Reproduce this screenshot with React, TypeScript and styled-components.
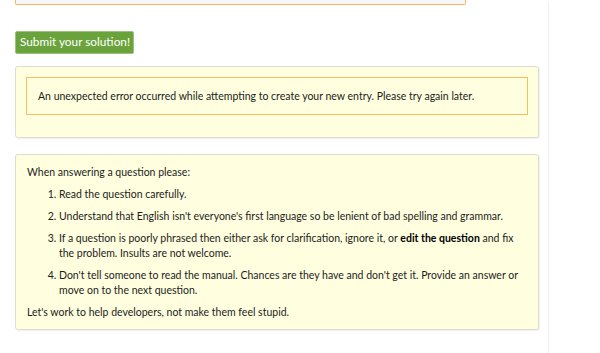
import React from "react";
import styled, { createGlobalStyle } from "styled-components";

const GlobalStyle = createGlobalStyle`
  html, body { margin: 0; padding: 0; background: #fff; }
  body {
    font-family: Lato, "Liberation Sans", sans-serif;
    font-size: 10.5px;
    line-height: 15px;
    color: #1c1c1c;
  }
`;

const Page = styled.div`
  display: flex;
  min-height: 353px;
`;

const Main = styled.main`
  width: 524px;
  padding: 0 9px 0 15px;
  display: flex;
  flex-direction: column;
  align-items: flex-start;
`;

const Sidebar = styled.aside`
  flex: 1;
  margin-top: 2px;
  border-left: 1px solid #eeeeee;
`;

const EditorTail = styled.div`
  box-sizing: border-box;
  width: 451px;
  height: 5px;
  background: #f7f7f7;
  border: 1px solid #f8b55c;
  border-top: none;
  border-radius: 0 0 2px 2px;
`;

const SubmitButton = styled.button`
  box-sizing: border-box;
  margin-top: 26px;
  height: 23px;
  padding: 0 3px 1px 4px;
  background: #6aa33b;
  border: 1px solid #9cc27c;
  border-radius: 2px;
  color: #fff;
  font-family: Lato, "Liberation Sans", sans-serif;
  font-size: 11.8px;
  line-height: 20px;
  cursor: pointer;
`;

const Panel = styled.section<{ $gap: number }>`
  box-sizing: border-box;
  width: 524px;
  margin-top: ${(p) => p.$gap}px;
  padding: 10px 12px 9px 11px;
  background: #ffffdf;
  border: 1px solid #dcdcd0;
  border-radius: 3px;
  box-shadow: 1px 1px 1px rgba(0, 0, 0, 0.06);
`;

const ErrorPanel = styled(Panel)`
  padding: 10px 10px 22px 10px;
`;

const ErrorBox = styled.div`
  padding: 11px 11px 10px 11px;
  border: 1px solid #f9bd62;
`;

const Lead = styled.p`
  margin: 0 0 7px 0;
`;

const Rules = styled.ol`
  margin: 0;
  padding-left: 32px;
`;

const Rule = styled.li`
  margin-bottom: 7px;
`;

const Strong = styled.b`
  color: #000;
  font-weight: 700;
`;

const Closing = styled.p`
  margin: 0;
`;

export default function App() {
  return (
    <>
      <GlobalStyle />
      <Page>
        <Main>
          <EditorTail />
          <SubmitButton>Submit your solution!</SubmitButton>
          <ErrorPanel $gap={12}>
            <ErrorBox>
              An unexpected error occurred while attempting to create your new entry. Please try again later.
            </ErrorBox>
          </ErrorPanel>
          <Panel $gap={16}>
            <Lead>When answering a question please:</Lead>
            <Rules>
              <Rule>Read the question carefully.</Rule>
              <Rule>
                Understand that English isn't everyone's first language so be lenient of bad spelling and grammar.
              </Rule>
              <Rule>
                If a question is poorly phrased then either ask for clarification, ignore it, or{" "}
                <Strong>edit the question</Strong> and fix the problem. Insults are not welcome.
              </Rule>
              <Rule>
                Don't tell someone to read the manual. Chances are they have and don't get it. Provide an answer or
                move on to the next question.
              </Rule>
            </Rules>
            <Closing>Let's work to help developers, not make them feel stupid.</Closing>
          </Panel>
        </Main>
        <Sidebar />
      </Page>
    </>
  );
}
